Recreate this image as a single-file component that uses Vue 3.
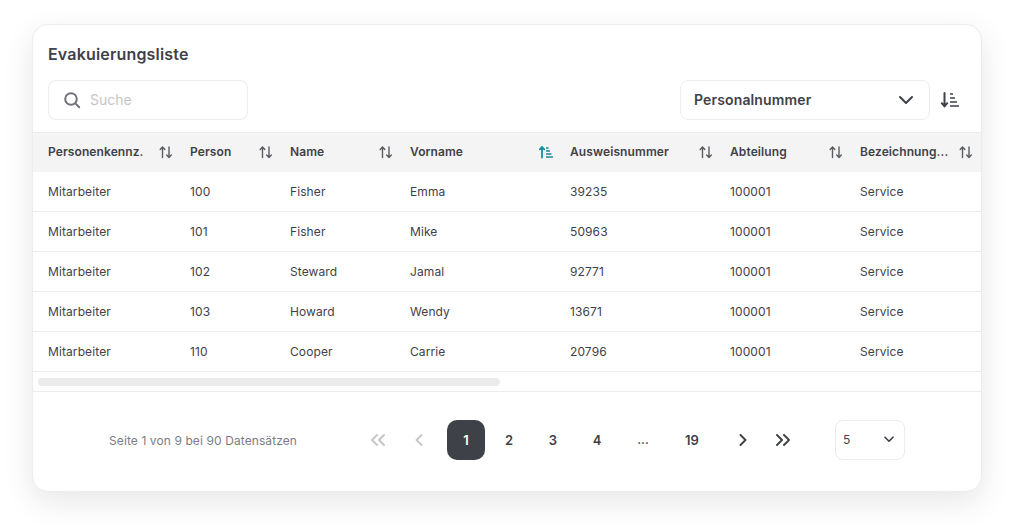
<script setup>
const columns = [
  { label: 'Personenkennz.' },
  { label: 'Person' },
  { label: 'Name' },
  { label: 'Vorname', active: true },
  { label: 'Ausweisnummer' },
  { label: 'Abteilung' },
  { label: 'Bezeichnung...' },
]
const rows = [
  ['Mitarbeiter', '100', 'Fisher', 'Emma', '39235', '100001', 'Service'],
  ['Mitarbeiter', '101', 'Fisher', 'Mike', '50963', '100001', 'Service'],
  ['Mitarbeiter', '102', 'Steward', 'Jamal', '92771', '100001', 'Service'],
  ['Mitarbeiter', '103', 'Howard', 'Wendy', '13671', '100001', 'Service'],
  ['Mitarbeiter', '110', 'Cooper', 'Carrie', '20796', '100001', 'Service'],
]
const pages = ['2', '3', '4', '...', '19']
</script>

<template>
  <div class="page">
    <section class="card">
      <h1 class="title">Evakuierungsliste</h1>
      <div class="toolbar">
        <div class="search">
          <svg width="20" height="20" viewBox="0 0 20 20" fill="none" stroke="#71717a" stroke-width="2" stroke-linecap="round">
            <circle cx="9" cy="9" r="5.8" />
            <path d="M13.4 13.4 17.2 17.2" />
          </svg>
          <span class="placeholder">Suche</span>
        </div>
        <div class="sort">
          <div class="select">
            <span>Personalnummer</span>
            <svg width="16" height="10" viewBox="0 0 16 10" fill="none" stroke="#3f4149" stroke-width="2" stroke-linecap="round" stroke-linejoin="round">
              <path d="M2 2 8 8l6-6" />
            </svg>
          </div>
          <svg class="sort-dir" width="20" height="16" viewBox="0 0 20 16" fill="none" stroke="#3f4149" stroke-linecap="round" stroke-linejoin="round">
            <path d="M4.5 1v13.2M1.8 11.2 4.5 14.4 7.2 11.2" stroke-width="2" />
            <path d="M10 2h3M10 6h5M10 10h7M10 14h9" stroke-width="1.7" stroke-linecap="butt" />
          </svg>
        </div>
      </div>

      <div class="table">
        <div class="row head">
          <div v-for="c in columns" :key="c.label" class="cell">
            <span class="label">{{ c.label }}</span>
            <svg v-if="c.active" class="sort-icon" width="14" height="14" viewBox="0 0 14 14" fill="none" stroke="#178c9e" stroke-linecap="round" stroke-linejoin="round">
              <path d="M3 12.5V2M.8 4.4 3 2l2.2 2.4" stroke-width="1.8" />
              <path d="M7 3h2.5M7 6h4M7 9h5.5M7 12h7" stroke-width="1.5" stroke-linecap="butt" />
            </svg>
            <svg v-else class="sort-icon" width="14" height="14" viewBox="0 0 14 14" fill="none" stroke="#5b5d65" stroke-width="1.4" stroke-linecap="round" stroke-linejoin="round">
              <path d="M3.5 12.5V2M1.2 4.4 3.5 2l2.3 2.4" />
              <path d="M10 2v10.5M7.7 10.1 10 12.5l2.3-2.4" />
            </svg>
          </div>
        </div>
        <div v-for="(r, i) in rows" :key="i" class="row body">
          <div v-for="(v, j) in r" :key="j" class="cell">{{ v }}</div>
        </div>
      </div>

      <div class="scroll">
        <div class="thumb"></div>
      </div>

      <footer class="footer">
        <span class="summary">Seite 1 von 9 bei 90 Datensätzen</span>
        <nav class="pager">
          <svg class="first" width="16" height="12" viewBox="0 0 16 12" fill="none" stroke="#c4c5c9" stroke-width="1.8" stroke-linecap="round" stroke-linejoin="round">
            <path d="M7 1 2 6l5 5M14 1 9 6l5 5" />
          </svg>
          <svg class="prev" width="8" height="12" viewBox="0 0 8 12" fill="none" stroke="#c4c5c9" stroke-width="1.8" stroke-linecap="round" stroke-linejoin="round">
            <path d="M6.5 1 1.5 6l5 5" />
          </svg>
          <span class="num current">1</span>
          <span v-for="p in pages" :key="p" class="num" :class="{ wide: p === '19', dots: p === '...' }">{{ p }}</span>
          <svg class="next" width="8" height="12" viewBox="0 0 8 12" fill="none" stroke="#3f4149" stroke-width="1.9" stroke-linecap="round" stroke-linejoin="round">
            <path d="M1.5 1l5 5-5 5" />
          </svg>
          <svg class="last" width="16" height="12" viewBox="0 0 16 12" fill="none" stroke="#3f4149" stroke-width="1.9" stroke-linecap="round" stroke-linejoin="round">
            <path d="M2 1l5 5-5 5M9 1l5 5-5 5" />
          </svg>
        </nav>
        <div class="size">
          <span>5</span>
          <svg width="10" height="7" viewBox="0 0 10 7" fill="none" stroke="#3f4149" stroke-width="1.6" stroke-linecap="round" stroke-linejoin="round">
            <path d="M1 1.2 5 5.2l4-4" />
          </svg>
        </div>
      </footer>
    </section>
  </div>
</template>

<style scoped>
.page {
  width: 1014px;
  height: 532px;
  padding: 24px 32px 0;
  box-sizing: border-box;
  background: #fff;
  font-family: Inter, "Liberation Sans", sans-serif;
  color: #3f4149;
  overflow: hidden;
}
.card {
  width: 950px;
  height: 468px;
  box-sizing: border-box;
  border: 1px solid #ececee;
  border-radius: 16px;
  background: #fff;
  box-shadow: 0 10px 30px rgba(20, 20, 30, 0.1);
  display: flex;
  flex-direction: column;
  overflow: hidden;
}
.title {
  margin: 0;
  padding: 19px 15px 1px;
  font-size: 16px;
  line-height: 20px;
  font-weight: 600;
  letter-spacing: 0.18px;
  color: #3f4149;
}
.toolbar {
  display: flex;
  justify-content: space-between;
  padding: 15px 21px 0 15px;
  height: 40px;
}
.search {
  width: 200px;
  height: 40px;
  box-sizing: border-box;
  border: 1px solid #ececee;
  border-radius: 8px;
  display: flex;
  align-items: center;
  gap: 8px;
  padding-left: 13px;
  padding-bottom: 1px;
}
.placeholder {
  font-size: 14px;
  color: #c4c5c9;
}
.sort {
  display: flex;
  align-items: center;
  gap: 10px;
}
.select {
  width: 250px;
  height: 40px;
  box-sizing: border-box;
  border: 1px solid #ececee;
  border-radius: 8px;
  display: flex;
  align-items: center;
  justify-content: space-between;
  padding: 0 15px 1px 13px;
  font-size: 14px;
  font-weight: 600;
  letter-spacing: 0.14px;
}
.table {
  margin-top: 12px;
}
.row {
  display: grid;
  grid-template-columns: 142px 100px 120px 160px 160px 130px 130px;
  height: 40px;
  box-sizing: border-box;
  letter-spacing: 0.1px;
}
.row.head {
  background: #f4f4f5;
  border-top: 1px solid #ececee;
  padding-bottom: 2px;
  font-size: 12px;
  font-weight: 600;
}
.row.body {
  border-bottom: 1px solid #ececee;
  font-size: 12px;
  color: #3f4149;
}
.cell {
  display: flex;
  align-items: center;
  justify-content: space-between;
  padding-left: 15px;
  padding-right: 2px;
  white-space: nowrap;
}
.sort-icon {
  flex: none;
}
.scroll {
  height: 20px;
  box-sizing: border-box;
  border-bottom: 1px solid #ececee;
  padding: 6px 0 0 5px;
}
.thumb {
  width: 462px;
  height: 8px;
  border-radius: 4px;
  background: #ebebeb;
}
.footer {
  flex: 1;
  display: flex;
  align-items: center;
  padding: 0 0 4px 76px;
}
.summary {
  width: 261px;
  padding-top: 2px;
  font-size: 12px;
  letter-spacing: 0.1px;
  color: #7b7d84;
}
.pager {
  display: flex;
  align-items: center;
  font-size: 13px;
  font-weight: 600;
}
.first { margin-right: 29px; }
.prev { margin-right: 24px; }
.num {
  width: 38px;
  height: 40px;
  margin-right: 6px;
  display: flex;
  align-items: center;
  justify-content: center;
  border-radius: 10px;
}
.num.current {
  background: #3f4149;
  color: #fff;
  margin-right: 5px;
}
.num.dots {
  margin-left: 2px;
  margin-right: 11px;
  font-size: 12px;
}
.num.wide { margin-right: 28px; }
.next { margin-right: 28px; }
.size {
  width: 70px;
  height: 40px;
  margin-left: 44px;
  box-sizing: border-box;
  border: 1px solid #ececee;
  border-radius: 8px;
  display: flex;
  align-items: center;
  justify-content: space-between;
  padding: 0 10px 0 7px;
  font-size: 12px;
}
</style>
